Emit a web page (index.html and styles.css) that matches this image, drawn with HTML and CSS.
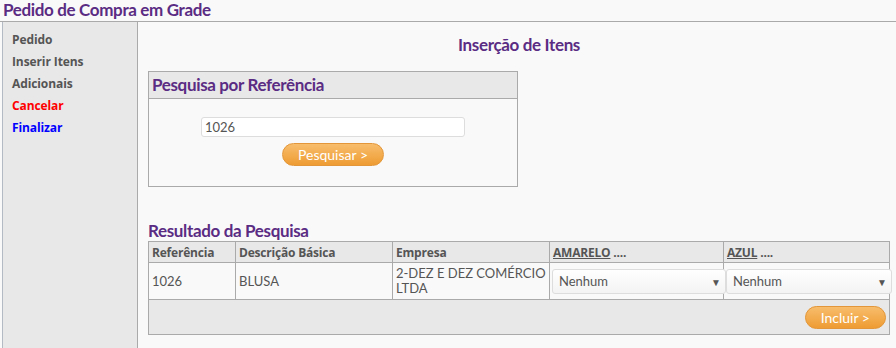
FILE: index.html
```html
<!DOCTYPE html>
<html lang="pt-BR">
<head>
  <meta charset="UTF-8" />
  <title>Pedido de Compra em Grade</title>
  <link rel="stylesheet" href="styles.css">
</head>
<body>
  <h1 class="page-title">Pedido de Compra em Grade</h1>

  <div class="layout">
    <nav class="side-menu">
      <a href="#">Pedido</a>
      <a href="#">Inserir Itens</a>
      <a href="#">Adicionais</a>
      <a href="#" class="cancel">Cancelar</a>
      <a href="#" class="finish">Finalizar</a>
    </nav>

    <main class="content">
      <h2 class="section-title">Inserção de Itens</h2>

      <div class="search-box">
        <div class="box-head">Pesquisa por Referência</div>
        <div class="box-body">
          <input type="text" class="ref-input" value="1026" />
          <button class="btn">Pesquisar &gt;</button>
        </div>
      </div>

      <h3 class="result-title">Resultado da Pesquisa</h3>
      <table class="result-table">
        <thead>
          <tr>
            <th class="col-ref">Referência</th>
            <th class="col-desc">Descrição Básica</th>
            <th class="col-emp">Empresa</th>
            <th class="col-cor1"><u>AMARELO</u> ....</th>
            <th class="col-cor2"><u>AZUL</u> ....</th>
          </tr>
        </thead>
        <tbody>
          <tr>
            <td>1026</td>
            <td>BLUSA</td>
            <td>2-DEZ E DEZ COMÉRCIO LTDA</td>
            <td class="cell-select">
              <span class="select-wrap">
                <select><option>Nenhum</option></select>
              </span>
            </td>
            <td class="cell-select">
              <span class="select-wrap">
                <select><option>Nenhum</option></select>
              </span>
            </td>
          </tr>
        </tbody>
        <tfoot>
          <tr>
            <td colspan="5" class="actions">
              <button class="btn">Incluir &gt;</button>
            </td>
          </tr>
        </tfoot>
      </table>
    </main>
  </div>
</body>
</html>
```

FILE: styles.css
```css
:root {
  --roxo: #5b2c83;
  --cinza: #555;
  --borda: #aaa;
  --fundo: #f9f9f9;
  --fundo-cinza: #e8e8e8;
}

html, body {
  height: 100%;
}

body {
  margin: 0;
  background: var(--fundo);
  font-family: "Lato", sans-serif;
  font-size: 13px;
  color: var(--cinza);
}

.page-title {
  margin: 0;
  height: 21px;
  padding-left: 3px;
  border-bottom: 1px solid var(--borda);
  font-size: 17px;
  font-weight: bold;
  letter-spacing: -0.35px;
  line-height: 20px;
  color: var(--roxo);
}

.layout {
  display: flex;
  height: calc(100% - 22px);
}

.side-menu {
  flex: none;
  width: 125px;
  margin-left: 2px;
  padding: 10px 0 0 9px;
  background: var(--fundo-cinza);
  border-left: 1px solid #b4bac4;
  border-right: 1px solid var(--borda);
  display: flex;
  flex-direction: column;
  gap: 6px;
}

.side-menu a {
  font-family: "Open Sans", sans-serif;
  font-size: 12px;
  font-weight: bold;
  letter-spacing: -0.1px;
  line-height: 16px;
  color: var(--cinza);
  text-decoration: none;
}

.side-menu a.cancel {
  color: #ff0000;
}

.side-menu a.finish {
  color: #0000ff;
}

.content {
  flex: 1;
  padding: 0 7px 0 10px;
}

.section-title,
.box-head,
.result-title {
  font-weight: bold;
  font-size: 17px;
  letter-spacing: -0.35px;
  color: var(--roxo);
}

.section-title {
  margin: 13px 0 16px;
  text-align: center;
  line-height: 20px;
}

.search-box {
  width: 368px;
  border: 1px solid var(--borda);
}

.box-head {
  height: 26px;
  line-height: 26px;
  padding-left: 3px;
  background: var(--fundo-cinza);
  border-bottom: 1px solid var(--borda);
}

.box-body {
  height: 87px;
  display: flex;
  flex-direction: column;
  align-items: center;
  padding-top: 18px;
  box-sizing: border-box;
  gap: 6px;
}

.ref-input {
  width: 264px;
  height: 20px;
  box-sizing: border-box;
  padding: 0 3px;
  border: 1px solid #ddd;
  border-radius: 3px;
  background: #fff;
  font-family: "Lato", sans-serif;
  font-size: 13px;
  color: var(--cinza);
}

.btn {
  height: 23px;
  padding: 0 15px;
  border: 1px solid #e3973a;
  border-radius: 12px;
  background: linear-gradient(to bottom, #f8bd6c, #ee9c33);
  font-family: "Lato", sans-serif;
  font-size: 14px;
  color: #fff;
  cursor: pointer;
}

.result-title {
  margin: 34px 0 0;
  line-height: 20px;
}

.result-table {
  width: 742px;
  border-collapse: collapse;
  font-size: 13px;
}

.result-table th,
.result-table td {
  border: 1px solid var(--borda);
  padding: 0 3px;
  text-align: left;
  vertical-align: middle;
}

.result-table th {
  height: 20px;
  background: var(--fundo-cinza);
  font-family: "Open Sans", sans-serif;
  font-size: 12px;
  font-weight: bold;
  letter-spacing: -0.2px;
  color: var(--cinza);
}

.result-table tbody td {
  height: 36px;
  line-height: 15px;
}

.result-table td.cell-select {
  padding-left: 2px;
}

.col-ref { width: 80px; }
.col-desc { width: 150px; }
.col-emp { width: 150px; }
.col-cor1 { width: 167px; }

.select-wrap {
  position: relative;
  display: block;
  width: calc(100% + 6px);
}

.select-wrap select {
  width: 100%;
  height: 25px;
  padding: 0 6px;
  appearance: none;
  border: 1px solid #ddd;
  border-radius: 3px;
  background: linear-gradient(to bottom, #fff, #f3f3f3);
  font-family: "Lato", sans-serif;
  font-size: 13px;
  color: var(--cinza);
}

.select-wrap::after {
  content: "\25BC";
  position: absolute;
  right: 5px;
  top: 6px;
  font-size: 10px;
  color: #555;
  pointer-events: none;
}

.result-table tfoot td {
  height: 34px;
  background: var(--fundo-cinza);
  text-align: right;
  padding-right: 3px;
}
```
